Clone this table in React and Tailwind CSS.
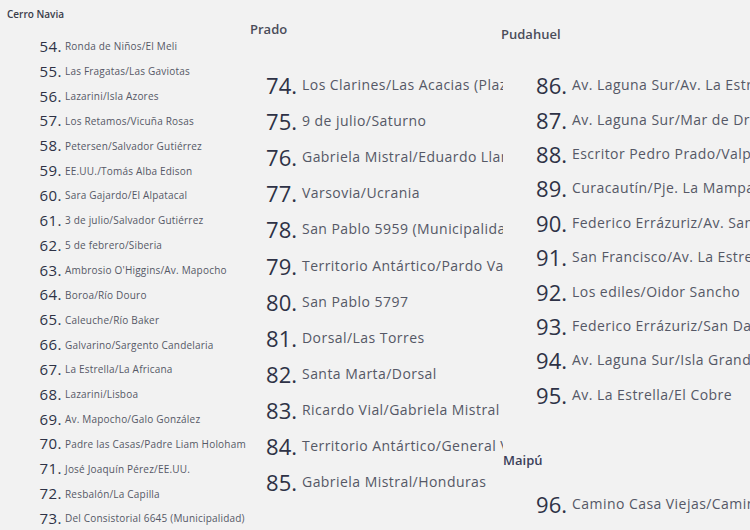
import React from 'react';

const cerroNavia = [
  ['54', 'Ronda de Niños/El Meli'],
  ['55', 'Las Fragatas/Las Gaviotas'],
  ['56', 'Lazarini/Isla Azores'],
  ['57', 'Los Retamos/Vicuña Rosas'],
  ['58', 'Petersen/Salvador Gutiérrez'],
  ['59', 'EE.UU./Tomás Alba Edison'],
  ['60', 'Sara Gajardo/El Alpatacal'],
  ['61', '3 de julio/Salvador Gutiérrez'],
  ['62', '5 de febrero/Siberia'],
  ['63', "Ambrosio O'Higgins/Av. Mapocho"],
  ['64', 'Boroa/Río Douro'],
  ['65', 'Caleuche/Río Baker'],
  ['66', 'Galvarino/Sargento Candelaria'],
  ['67', 'La Estrella/La Africana'],
  ['68', 'Lazarini/Lisboa'],
  ['69', 'Av. Mapocho/Galo González'],
  ['70', 'Padre las Casas/Padre Liam Holoham'],
  ['71', 'José Joaquín Pérez/EE.UU.'],
  ['72', 'Resbalón/La Capilla'],
  ['73', 'Del Consistorial 6645 (Municipalidad)'],
];

const prado = [
  ['74', 'Los Clarines/Las Acacias (Plaza)'],
  ['75', '9 de julio/Saturno'],
  ['76', 'Gabriela Mistral/Eduardo Llanos'],
  ['77', 'Varsovia/Ucrania'],
  ['78', 'San Pablo 5959 (Municipalidad)'],
  ['79', 'Territorio Antártico/Pardo Valdés'],
  ['80', 'San Pablo 5797'],
  ['81', 'Dorsal/Las Torres'],
  ['82', 'Santa Marta/Dorsal'],
  ['83', 'Ricardo Vial/Gabriela Mistral'],
  ['84', 'Territorio Antártico/General Velásquez'],
  ['85', 'Gabriela Mistral/Honduras'],
];

const pudahuel = [
  ['86', 'Av. Laguna Sur/Av. La Estrella'],
  ['87', 'Av. Laguna Sur/Mar de Drake'],
  ['88', 'Escritor Pedro Prado/Valparaíso'],
  ['89', 'Curacautín/Pje. La Mampara'],
  ['90', 'Federico Errázuriz/Av. San Pablo'],
  ['91', 'San Francisco/Av. La Estrella'],
  ['92', 'Los ediles/Oidor Sancho'],
  ['93', 'Federico Errázuriz/San Daniel'],
  ['94', 'Av. Laguna Sur/Isla Grande'],
  ['95', 'Av. La Estrella/El Cobre'],
];

// small list row (first column)
function SmallRow({ n, label }) {
  return (
    <div className="flex items-center h-[24.85px] whitespace-nowrap">
      <span className="w-[62px] shrink-0 text-right text-[15px] tracking-[0.5px] text-[#2e3246] leading-none">{n}.</span>
      <span className="ml-[3px] text-[10px] tracking-[0.2px] text-[#555866] leading-none">{label}</span>
    </div>
  );
}

// big list row (second and third column)
function BigRow({ n, label, w, h }) {
  return (
    <div className={`flex items-center whitespace-nowrap ${h}`}>
      <span className={`${w} shrink-0 text-right text-[22px] text-[#2e3246] leading-none`}>{n}.</span>
      <span className="ml-[5px] text-[14px] tracking-[0.45px] text-[#555866] leading-none">{label}</span>
    </div>
  );
}

export default function App() {
  return (
    <div
      className="w-[750px] h-[530px] bg-[#f2f2f2] flex overflow-hidden"
      style={{ fontFamily: '"Open Sans", "Noto Sans", sans-serif' }}
    >
      {/* Cerro Navia */}
      <div className="w-[250px] shrink-0 overflow-hidden pt-[7px]">
        <div className="ml-[7px] h-[14px] leading-[14px] text-[10px] font-semibold text-[#3a3d4a]">Cerro Navia</div>
        <div className="mt-[13px]">
          {cerroNavia.map(([n, label]) => (
            <SmallRow key={n} n={n} label={label} />
          ))}
        </div>
      </div>

      {/* Prado */}
      <div className="w-[253px] shrink-0 overflow-hidden pt-[20px]">
        <div className="h-[18px] leading-[18px] text-[13px] font-semibold text-[#4a4d5a]">Prado</div>
        <div className="mt-[29px]">
          {prado.map(([n, label]) => (
            <BigRow key={n} n={n} label={label} w="w-[47px]" h="h-[36.1px]" />
          ))}
        </div>
      </div>

      {/* Pudahuel */}
      <div className="flex-1 overflow-hidden pt-[25px] -ml-[3px]">
        <div className="ml-[1px] h-[18px] leading-[18px] text-[13px] font-semibold text-[#4a4d5a]">Pudahuel</div>
        <div className="mt-[25px]">
          {pudahuel.map(([n, label]) => (
            <BigRow key={n} n={n} label={label} w="w-[67px]" h="h-[34.4px]" />
          ))}
        </div>

        {/* Maipú */}
        <div className="mt-[39px] ml-[3px] h-[18px] leading-[18px] text-[13px] font-semibold text-[#3a3f5a]">Maipú</div>
        <div className="mt-[18px]">
          <BigRow n="96" label="Camino Casa Viejas/Camino Lo Errázuriz" w="w-[67px]" h="h-[34.4px]" />
        </div>
      </div>
    </div>
  );
}
